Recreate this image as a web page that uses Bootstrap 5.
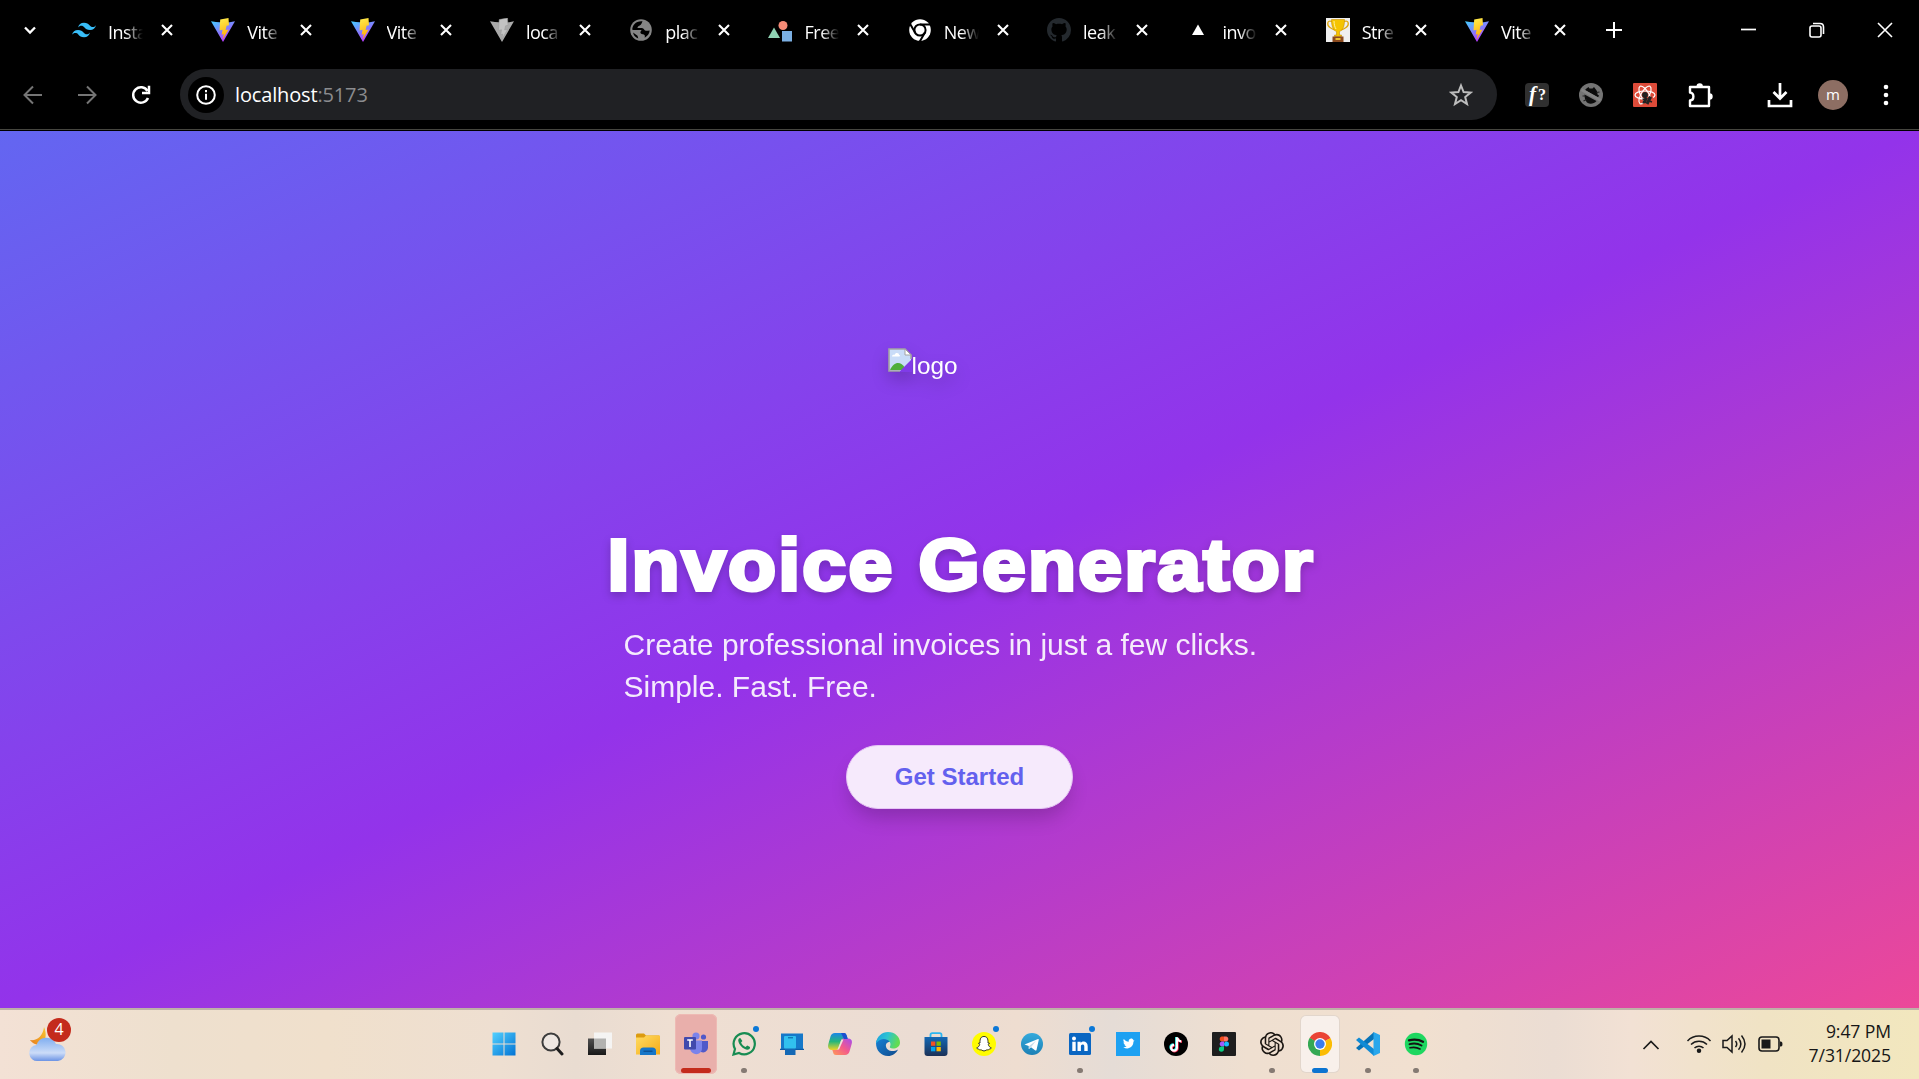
<!DOCTYPE html>
<html lang="en">
<head>
<meta charset="utf-8">
<title>Invoice Generator</title>
<link href="https://cdn.jsdelivr.net/npm/bootstrap@5.3.0/dist/css/bootstrap.min.css" rel="stylesheet">
<style>
body{height:1079px;overflow:hidden;font-family:"Open Sans","Noto Sans",sans-serif;background:#000}
svg{display:block;flex:none}
.sprite{position:absolute;width:0;height:0}
.ic{width:24px;height:24px}
/* browser chrome */
.browser{height:131px;color:#fff;border-bottom:1px solid #000;box-shadow:inset 0 -1px #46463f}
.strip{height:60px;padding-left:18px}
.tab-item{width:139.3px;height:60px;padding-left:2px}
.tab-name{width:35px;margin-left:12px;font-size:18px;letter-spacing:-.5px;white-space:nowrap;padding-top:4px;-webkit-mask-image:linear-gradient(90deg,#000 50%,transparent);mask-image:linear-gradient(90deg,#000 50%,transparent)}
.tab-x{margin-left:17px;width:14px;height:14px}
.bar-row{height:68px;padding-top:9px}
.nav-icons{height:51px}
.omni{width:1317px;height:51px;margin-left:29px;background:#202124;border-radius:26px;padding:0 24px 0 8px}
.site-info{width:36px;height:36px;border-radius:50%;background:#000}
.url{font-size:20px;letter-spacing:-.15px;margin-left:11px}
.url span{color:#8b8c8f}
.avatar{width:30px;height:30px;border-radius:50%;background:#8d6e63;font-size:15px;line-height:28px;text-align:center;margin-left:25px}
.ms-34{margin-left:34px}
.ms-30{margin-left:30px}
/* page */
.hero{height:877px;background:linear-gradient(to bottom right,#6366f1,#9333ea,#ec4899);font-family:"Liberation Sans",Arial,sans-serif;color:#fff;padding-top:217px}
.logo-box{width:144px;height:144px;font-size:24.3px;line-height:36px;filter:drop-shadow(0 8px 8px rgba(0,0,0,.18))}
.title{font-size:72px;font-weight:700;line-height:75px;margin-top:36px;width:702px;white-space:nowrap;letter-spacing:2.1px;-webkit-text-stroke:3.8px #fff;transform:scaleX(1.092);transform-origin:17px 0;filter:drop-shadow(0 4px 4px rgba(0,0,0,.2))}
.sub{width:672px;font-size:30px;line-height:42px;margin-top:21px;opacity:.9}
.cta{width:227px;height:64px;margin-top:37px;border-radius:32px;background:#f6eafc;color:#6360ee;font-weight:700;font-size:24px;border:1px solid #e6c6f5;box-shadow:0 12px 20px -4px rgba(0,0,0,.2)}
.cta:hover{background:#fff}
/* taskbar */
.taskbar{height:71px;color:#161616;border-top:2px solid #beb1a7;background:linear-gradient(90deg,#f3e1d5 0,#eee0ce 9%,#f0e0cc 17%,#eedfd1 26%,#e9dcd1 30%,#efdfd2 35%,#ebdcd3 48%,#eeddd0 53%,#e5dcd6 58%,#efdfd0 65%,#f1e0d0 74%,#ebddd3 81%,#f2e1d4 85%,#f0e3c4 92%,#f2e7be 100%)}
.weather{width:480px;padding-left:29px}
.count{position:absolute;left:18px;top:-8px;width:24px;height:24px;border-radius:50%;background:#c42b1c;color:#fff;font-size:16px;line-height:23px;text-align:center}
.app{width:48px;height:69px;position:relative;padding-bottom:1px}
.app.tile::before{content:"";position:absolute;left:5px;top:6px;width:38px;height:56px;border-radius:5px;background:#f8f0eb;box-shadow:0 0 0 1px #e2d6cc}
.app.alert-tile::before{left:3px;top:4px;width:42px;height:60px;background:#e9afab;box-shadow:inset 0 0 0 1px #eebab4;border-radius:6px}
.app svg{position:relative}
.app.run::after{content:"";position:absolute;left:21px;bottom:6px;width:6px;height:5px;border-radius:3px;background:#857a73}
.app.tile::after{content:"";position:absolute;left:16px;bottom:6px;width:16px;height:5px;border-radius:3px;background:#0b74d1}
.app.alert-tile::after{left:9px;bottom:6px;width:30px;background:#c42b1c}
.ping{position:absolute;left:33px;top:16px;width:6px;height:6px;border-radius:50%;background:#0b78d7}
.clock{font-size:17.6px;line-height:24px;letter-spacing:-.1px;width:108px;padding-bottom:3px}
</style>
</head>
<body>
<svg class="sprite">
<defs>
<linearGradient id="va" x1="0" y1="0" x2=".6" y2="1"><stop stop-color="#41d1ff"/><stop offset="1" stop-color="#bd34fe"/></linearGradient>
<linearGradient id="vb" x1=".4" y1="0" x2=".6" y2="1"><stop stop-color="#ffea4a"/><stop offset="1" stop-color="#ffa800"/></linearGradient>
<linearGradient id="wa" x1="0" y1="0" x2="1" y2="1"><stop stop-color="#52d1ff"/><stop offset="1" stop-color="#0273d4"/></linearGradient>
<linearGradient id="fa" x1="0" y1="0" x2="1" y2="1"><stop stop-color="#ffdc62"/><stop offset="1" stop-color="#f6ab17"/></linearGradient>
<linearGradient id="ta" x1="0" y1="0" x2="0" y2="1"><stop stop-color="#505050"/><stop offset="1" stop-color="#181818"/></linearGradient>
<linearGradient id="ca" x1="0" y1="0" x2="0" y2="1"><stop stop-color="#1b86e8"/><stop offset=".5" stop-color="#25b67c"/><stop offset="1" stop-color="#f0d326"/></linearGradient>
<linearGradient id="cb" x1="1" y1="0" x2="0" y2="1"><stop stop-color="#a44bf0"/><stop offset=".5" stop-color="#f35a8c"/><stop offset="1" stop-color="#ff9a56"/></linearGradient>
<linearGradient id="ea" x1="0" y1="0" x2="1" y2=".3"><stop stop-color="#1b9de2"/><stop offset=".5" stop-color="#2bc3d2"/><stop offset="1" stop-color="#62dc52"/></linearGradient>
<linearGradient id="eb" x1="0" y1="0" x2="1" y2="1"><stop stop-color="#1683d9"/><stop offset="1" stop-color="#114a8b"/></linearGradient>
<linearGradient id="sa" x1="0" y1="0" x2="0" y2="1"><stop stop-color="#1368b5"/><stop offset="1" stop-color="#1c3157"/></linearGradient>
<linearGradient id="ga" x1="0" y1="0" x2="0" y2="1"><stop stop-color="#35aadc"/><stop offset="1" stop-color="#1c80b5"/></linearGradient>
<linearGradient id="ma" x1="0" y1="1" x2="1" y2="0"><stop stop-color="#e87c1c"/><stop offset="1" stop-color="#f7c832"/></linearGradient>
<linearGradient id="mb" x1="0" y1="0" x2="0" y2="1"><stop stop-color="#80aef0"/><stop offset=".65" stop-color="#ccdcf8"/><stop offset="1" stop-color="#6b93e4"/></linearGradient>
</defs>
<symbol id="vite" viewBox="0 0 24 24"><path d="M0 3.200 12 24 24 3.200 16 4.800 5 4z" fill="url(#va)"/><path d="M17.500 0 9.200 1.600 8.500 12.400l3-.7-.8 5 2.100-.6-1.200 5.500 6-10.200-3 .6 1-4.200 2.400-.5z" fill="url(#vb)"/></symbol>
<symbol id="viteg" viewBox="0 0 24 24"><path d="M0 3.200 12 24 24 3.200 16 4.800 5 4z" fill="#aaa"/><path d="M17.500 0 9.200 1.600 8.500 12.400l3-.7-.8 5 2.100-.6-1.200 5.500 6-10.200-3 .6 1-4.200 2.400-.5z" fill="#c3c3c3" stroke="#999" stroke-width=".5"/></symbol>
<symbol id="tailwind" viewBox="0 0 24 24"><path fill="#38bdf8" d="M12 4.800c-3.200 0-5.200 1.600-6 4.800 1.200-1.600 2.600-2.200 4.200-1.800.9.200 1.600.9 2.300 1.700 1.200 1.200 2.600 2.500 5.500 2.500 3.200 0 5.200-1.600 6-4.800-1.200 1.600-2.600 2.200-4.200 1.800-.9-.2-1.600-.9-2.300-1.700-1.200-1.200-2.600-2.500-5.500-2.500zM6 12c-3.200 0-5.200 1.600-6 4.800 1.200-1.600 2.600-2.200 4.200-1.800.9.200 1.600.9 2.300 1.700 1.200 1.200 2.600 2.500 5.500 2.500 3.200 0 5.200-1.600 6-4.800-1.200 1.600-2.600 2.200-4.200 1.800-.9-.2-1.600-.9-2.300-1.700C10.300 13.300 8.900 12 6 12z"/></symbol>
<symbol id="globe" viewBox="0 0 24 24"><circle cx="12" cy="12" r="10.800" fill="#858585"/><path fill="#000" d="M13.500 3.200c-1 2-1 3.300-2.800 4.300-1.400.6-2.200 1.300-2.200 2.500h4.500c2 .2 2 2.500 3.800 2.800 1.200.2 2.200-.3 3.900-.3-.3 3-2.200 5.700-5 7.200.2-1.500.5-2.300-.8-3.200-1.500-.8-3.200-.2-3.500-1.800-.2-1.300 1-1.700 1-2.700H4.500l-1.200-.2C3.100 7.200 7 2.600 13.500 3.200zM4 14.500l4.500 3.200.8 2.900A8.800 8.800 0 0 1 4 14.500z"/></symbol>
<symbol id="shapes" viewBox="0 0 24 24"><path d="M0 20 6 9.500 12 20z" fill="#8fd3b3"/><circle cx="15" cy="7.500" r="4.500" fill="#f58b76"/><path d="M14 13h10v10.500H14z" fill="#7cb0e4"/></symbol>
<symbol id="chromew" viewBox="0 0 24 24"><circle cx="12" cy="12" r="10.800" fill="#fff"/><circle cx="12" cy="12" r="5.600" fill="none" stroke="#000" stroke-width="2"/><path d="M12 6.500h10.500M7.200 14.800 2 5.800M16.800 14.800 11.500 24" stroke="#000" stroke-width="2"/></symbol>
<symbol id="github" viewBox="0 0 16 16"><path fill="#24292e" d="M8 0C3.580 0 0 3.580 0 8c0 3.540 2.290 6.530 5.470 7.590.4.070.55-.17.55-.38 0-.19-.01-.82-.01-1.490-2.010.37-2.530-.49-2.690-.94-.09-.23-.48-.94-.82-1.130-.28-.15-.68-.52-.01-.53.63-.01 1.080.58 1.230.82.720 1.210 1.870.87 2.330.66.070-.52.280-.87.510-1.070-1.780-.2-3.640-.89-3.640-3.950 0-.87.310-1.590.82-2.150-.08-.2-.36-1.020.08-2.120 0 0 .67-.21 2.200.82.640-.18 1.320-.27 2-.27s1.360.09 2 .27c1.530-1.040 2.200-.82 2.200-.82.440 1.100.16 1.920.08 2.120.51.56.82 1.270.82 2.150 0 3.070-1.870 3.750-3.650 3.950.29.250.54.730.54 1.480 0 1.070-.01 1.930-.01 2.200 0 .21.15.46.55.38A8.010 8.010 0 0 0 16 8c0-4.420-3.580-8-8-8z"/></symbol>
<symbol id="tri" viewBox="0 0 24 24"><path d="M6 17 12 6.500 18 17z" fill="#fff"/></symbol>
<symbol id="trophy" viewBox="0 0 24 24"><path fill="#efefef" d="M0 0h24v24H0z"/><path d="M6 3.500C1 1.500.5 7 4 9.500c1.500 1.200 3 2 5 2.500M18 3.500c5-2 5.500 3.500 2 6-1.500 1.200-3 2-5 2.500" fill="none" stroke="#e0a80c" stroke-width="1.300"/><path d="M5.500 1.500h13c0 7-1.500 10.500-5 12v3.500h2v1.500h-7V17h2v-3.500c-3.500-1.500-5-5-5-12z" fill="#f5c400" stroke="#c98f00" stroke-width=".6"/><path d="M8 3c.2 4 .8 6 2 8" stroke="#fff2a0" fill="none"/><path fill="#8b4a1e" d="M6.500 18.500h11v5.500h-11z"/><path fill="#efc12f" d="M9.500 20h5v2h-5z"/></symbol>
<symbol id="x" viewBox="0 0 14 14"><path d="M2 2l10 10M12 2 2 12" stroke="#fff" stroke-width="2.100"/></symbol>
<symbol id="fq" viewBox="0 0 24 24"><rect width="24" height="24" rx="4" fill="#303030"/></symbol>
<symbol id="bugoff" viewBox="0 0 24 24"><circle cx="12" cy="12" r="12" fill="#747474"/><path fill="#0c0c0c" d="M7.500 5.500 9.500 4l1 1.500h3L15 4l1.500 2c1.500 1.500 2 3 2 5.500l1.500 1-1 2L6 7zM5.500 11.500l12 6.500c-3 3.500-9 3.500-10.500 0C6 16.500 5.500 14 5.500 11.500z"/><path d="M3.500 13h3M17.500 9.500l3-.5M4.500 18l3-1.500" stroke="#222" stroke-width="1.200"/><path d="M2.500 6.800 21.500 17.200" stroke="#858585" stroke-width="2.800"/></symbol>
<symbol id="reactx" viewBox="0 0 24 24"><rect width="24" height="24" rx="1" fill="#dd4b39"/><g fill="none" stroke="#fff" stroke-width="1.200"><ellipse cx="12" cy="12" rx="10" ry="4"/><ellipse cx="12" cy="12" rx="10" ry="4" transform="rotate(60 12 12)"/><ellipse cx="12" cy="12" rx="10" ry="4" transform="rotate(120 12 12)"/></g><path d="M11 14h9v8h-9z" fill="#dd4b39"/><g stroke="#222" stroke-width="1.500"><circle cx="12" cy="12" r="2.200" fill="#222"/><path d="M13.500 14.500l-2.500 5M17.500 14l-3.500 7" stroke-width="3"/><path d="M9.500 16l4 1M9.500 20l4-1M15 17.500l4 1.500M15.500 14l3 .5"/></g></symbol>
<symbol id="puzzle" viewBox="0 0 26 26"><path fill="none" stroke="#fff" stroke-width="2.400" stroke-linejoin="round" d="M3 5h19v19H3v-5.500c4.500 0 4.500-8 0-8z"/><path fill="#fff" d="M9.500 4.500a3.200 3.200 0 0 1 6.400 0zM22.500 11.300a3.200 3.200 0 0 1 0 6.400z"/></symbol>
<symbol id="win" viewBox="0 0 24 24"><path fill="url(#wa)" d="M.5.5h11v11H.5zM12.500.5h11v11h-11zM.5 12.500h11v11H.5zM12.500 12.500h11v11h-11z"/></symbol>
<symbol id="find" viewBox="0 0 24 24"><circle cx="11" cy="10" r="8.600" fill="#eee7e2" stroke="#3c3c3c" stroke-width="2"/><path d="M17 16.500 22 22" stroke="#1e1e1e" stroke-width="3" stroke-linecap="round"/></symbol>
<symbol id="task" viewBox="0 0 24 24"><path fill="url(#ta)" d="M0 6.500h18V23H0z"/><path fill="#f5f4f3" d="M6 .5h18v16H6z"/><path fill="#b2b2b0" d="M6 6.500h12v10H6z"/></symbol>
<symbol id="folder" viewBox="0 0 24 24"><path fill="#dc9b10" d="M0 3q0-1.500 1.500-1.500H8L10 3.500h13V8H0z"/><path fill="url(#fa)" d="M0 5.500h8l2-2h14v19H0z"/><path fill="#1676c8" d="M4 23v-4q0-3.500 3.500-3.500h9Q20 15.500 20 19v4z"/><path d="M7.500 19.200h9" stroke="#0b4b8c" stroke-width="1.200"/></symbol>
<symbol id="teams" viewBox="0 0 24 24"><circle cx="19.500" cy="5" r="2.600" fill="#5059c9"/><path d="M15 9h9v7a5 5 0 0 1-7 4z" fill="#5059c9"/><circle cx="12" cy="4" r="3.600" fill="#7b83eb"/><path d="M6 8.500h12V16c0 8-10.500 8-12 1z" fill="#7b83eb"/><rect y="5" width="12" height="12.500" rx="1" fill="#4149ad"/><path d="M3.200 8h5.600M6 8v7" stroke="#fff" stroke-width="1.600"/></symbol>
<symbol id="wa-i" viewBox="0 0 24 24"><path d="M1.500 22.500 3 17A10.600 10.600 0 1 1 7 21z" fill="none" stroke="#178c52" stroke-width="2.200"/><path fill="#178c52" d="M8.300 6c-1.500 0-2.300 1.500-2 3 .8 4.200 4.500 7.800 8.700 8.800 1.700.2 3.300-1 3-2.800l-2.800-1.500-1.600 1.600c-2-.8-3.700-2.500-4.500-4.500L10.400 9z"/></symbol>
<symbol id="phone" viewBox="0 0 24 24"><path fill="#1678c9" d="M1 1.500h22v15l1 1.500H0l1-1.500z"/><path fill="#0d5ba6" d="M0 16.800h24v1.200H0z"/><rect x="5" y="15" width="10.500" height="8" fill="#1468b5"/><rect x="4" y="4" width="12" height="12.500" rx="1" fill="#31c0ef"/><path d="M8 5.800h5" stroke="#0b5c9b"/></symbol>
<symbol id="copilot" viewBox="0 0 24 24"><path fill="url(#ca)" d="M7 1h9c2 0 2.500 2 3 3.500l.7 2.500H16c-2 0-3 1-3.500 3L11 15c-.6 2-1.500 3-3 3H4c-3.500 0-4.700-2.500-3.500-6.500l2-7C3.200 2.200 4.500 1 7 1z"/><path fill="url(#cb)" d="M17 23H8c-2 0-2.500-1-3-3l-.7-2H8c2 0 3-1 3.500-3L13 9c.6-2 1.500-2.500 3-2.500h4c3.500 0 4.700 2.500 3.500 6l-2 7C20.800 21.800 19.500 23 17 23z"/><path d="M13 1h3c2 0 2.500 2 3 3.500l.7 2.500H16z" fill="#1c4fd0"/><path d="M13.500 7.500h2L11 17.500H9.500z" fill="#f0e2da"/></symbol>
<symbol id="edge" viewBox="0 0 24 24"><path fill="url(#eb)" d="M0 11C1 3 12 3 14 10c-3 0-4.500 2-4 4.500.8 4.500 7 6 12 3C20 21.500 16.500 24 12 24 5 24 0 18.500 0 11z"/><path fill="url(#ea)" d="M0 11.500C.5 4.500 6 0 12 0c7 0 12 5 12 10.500 0 4-3.500 6-7 6-3 0-3.800-1.200-2.800-2.500C16.500 8.500 6.500 2.500 0 11.500z"/></symbol>
<symbol id="store" viewBox="0 0 24 24"><path d="M6.500 6V3q0-1.800 1.800-1.800h7.400Q17.500 1.200 17.500 3v3" fill="none" stroke="#2bb5f0" stroke-width="1.800"/><path fill="url(#sa)" d="M.5 5h23v16q0 3-3 3h-17q-3 0-3-3z"/><path fill="#f25022" d="M7 9.500h4.300v4.300H7z"/><path fill="#7fba00" d="M12.500 9.500h4.300v4.300h-4.300z"/><path fill="#00a4ef" d="M7 15h4.300v4.300H7z"/><path fill="#ffb900" d="M12.500 15h4.300v4.300h-4.300z"/></symbol>
<symbol id="snap" viewBox="0 0 24 24"><circle cx="12" cy="12" r="12" fill="#fffc00"/><path d="M12 4.500c-3 0-4.200 2-4 6.500l-1.500.2 1.200 1.400c-.5 1.700-1.500 2.700-3 3.200.3 1.200 1.500 1 2.300 1.500.6 1 1.800.2 2.800.8 1.500 1.100 2.900 1.100 4.400 0 1-.6 2.200.2 2.800-.8.800-.5 2-.3 2.300-1.500-1.500-.5-2.500-1.500-3-3.200l1.200-1.400L16 11c.2-4.500-1-6.500-4-6.500z" fill="#fff" stroke="#222" stroke-width=".9"/></symbol>
<symbol id="tele" viewBox="0 0 24 24"><circle cx="12" cy="12" r="11" fill="url(#ga)"/><path fill="#fff" d="M4.500 12.500 18 7c.5-.2.900.1.800.7L16.500 18c-.2.600-.7.700-1.200.4L11 15.300 8.800 17v-3z"/><path d="M8.800 14.200 16 8.800l-5 6.500L8.800 17z" fill="#c6dcea"/></symbol>
<symbol id="linked" viewBox="0 0 24 24"><rect x="1" y="1" width="22" height="22" rx="1.500" fill="#0a66c2"/><circle cx="6" cy="6.500" r="2" fill="#fff"/><path fill="#fff" d="M4.300 9.700h3.400v9.300H4.300zM9.500 9.700h3.200V11c2-2.600 7-1.800 7 3.200V19h-3.400v-4.500c0-2.700-3.400-2.600-3.400 0V19H9.500z"/></symbol>
<symbol id="bird" viewBox="0 0 24 24"><path fill="#1da1f2" d="M0 0h24v24H0z"/><path fill="#fff" d="M17.500 8.500c-.5-2-2.800-2.500-4-1.200-.8.800-.9 1.500-.7 2.400-2-.1-3.800-1-5-2.700-.8 1.400-.4 2.700.7 3.500l-1-.3c0 1.200.7 2 1.900 2.400h-1c.3 1 1.100 1.500 2.200 1.600-.9.800-2.200 1.100-3.400 1 5 3 10.200 0 10.200-5.400l1.100-1.300z"/></symbol>
<symbol id="tiktok" viewBox="0 0 24 24"><circle cx="12" cy="12" r="12" fill="#000"/><path d="M12.200 5v10.200a2.900 2.900 0 1 1-2.800-2.900M12.500 5.500c.2 2.200 1.600 3.600 4 3.800" fill="none" stroke="#25f4ee" stroke-width="2.200"/><path d="M13.600 6v10.400a2.900 2.900 0 1 1-2.800-2.900M14 6c.2 2.200 1.600 3.600 4 3.800" fill="none" stroke="#fe2c55" stroke-width="2.200"/><path d="M12.900 5.200v10.500A2.900 2.900 0 1 1 10 12.900M13.200 5.500c.2 2.200 1.600 3.600 4 3.800" fill="none" stroke="#fff" stroke-width="2.200"/></symbol>
<symbol id="figma" viewBox="0 0 24 24"><rect width="24" height="24" rx="1" fill="#1e1e1e"/><path fill="#f24e1e" d="M12 4.500H9.500a2.600 2.600 0 0 0 0 5H12z"/><path fill="#ff7262" d="M12 4.500h2.500a2.600 2.600 0 0 1 0 5H12z"/><path fill="#a259ff" d="M12 9.500H9.500a2.600 2.600 0 0 0 0 5H12z"/><circle cx="14.500" cy="12" r="2.500" fill="#1abcfe"/><path fill="#0acf83" d="M12 14.500H9.500a2.600 2.600 0 1 0 2.500 2.600z"/></symbol>
<symbol id="gpt" viewBox="0 0 24 24"><path fill="#1b1612" d="M22.282 9.821a5.985 5.985 0 0 0-.516-4.911 6.046 6.046 0 0 0-6.510-2.900A6.065 6.065 0 0 0 4.981 4.182a5.985 5.985 0 0 0-3.998 2.900 6.046 6.046 0 0 0 .743 7.097 5.980 5.980 0 0 0 .511 4.911 6.051 6.051 0 0 0 6.515 2.900A5.985 5.985 0 0 0 13.260 24a6.056 6.056 0 0 0 5.772-4.206 5.990 5.990 0 0 0 3.998-2.900 6.056 6.056 0 0 0-.747-7.073zM13.260 22.430a4.476 4.476 0 0 1-2.876-1.041l.141-.081 4.779-2.758a.795.795 0 0 0 .393-.681v-6.737l2.020 1.169a.071.071 0 0 1 .038.052v5.583a4.504 4.504 0 0 1-4.495 4.494zM3.600 18.304a4.471 4.471 0 0 1-.535-3.014l.142.085 4.783 2.759a.771.771 0 0 0 .781 0l5.843-3.369v2.332a.08.08 0 0 1-.033.062L9.740 19.950a4.500 4.500 0 0 1-6.141-1.646zM2.341 7.896a4.485 4.485 0 0 1 2.366-1.973V11.600a.766.766 0 0 0 .388.676l5.815 3.355-2.020 1.169a.076.076 0 0 1-.071 0l-4.830-2.787A4.504 4.504 0 0 1 2.341 7.872zm16.597 3.855-5.833-3.387L15.119 7.200a.076.076 0 0 1 .071 0l4.830 2.791a4.494 4.494 0 0 1-.677 8.105v-5.678a.79.79 0 0 0-.405-.667zm2.010-3.023-.141-.085-4.774-2.782a.776.776 0 0 0-.785 0L9.409 9.230V6.897a.066.066 0 0 1 .028-.061l4.830-2.787a4.500 4.500 0 0 1 6.681 4.660zM8.307 12.863l-2.020-1.164a.08.08 0 0 1-.038-.057V6.075a4.500 4.500 0 0 1 7.376-3.453l-.142.080L8.704 5.460a.795.795 0 0 0-.393.681zm1.098-2.366 2.602-1.500 2.607 1.500v3l-2.598 1.500-2.607-1.500z"/></symbol>
<symbol id="chrome" viewBox="0 0 24 24"><path fill="#ea4335" d="M12 12 1.600 6a12 12 0 0 1 20.800 0z"/><path fill="#fbbc04" d="M12 12 22.400 6A12 12 0 0 1 12 24z"/><path fill="#34a853" d="M12 12v12A12 12 0 0 1 1.600 6z"/><path fill="#ea4335" d="M12 6h10.400L12 10z"/><path fill="#34a853" d="M1.600 6 6.800 15 12 12z"/><path fill="#fbbc04" d="M17.200 15 12 24V14z"/><circle cx="12" cy="12" r="6" fill="#fff"/><circle cx="12" cy="12" r="4.700" fill="#3b7cec"/></symbol>
<symbol id="code" viewBox="0 0 24 24"><path fill="#0873b7" d="M18 0v7L3 18.500 0 16z"/><path fill="#118bd5" d="M18 24v-7L3 5.500 0 8z"/><path fill="#29a7ec" d="M17.500 0 24 3v18l-6.500 3z"/></symbol>
<symbol id="spot" viewBox="0 0 24 24"><circle cx="12" cy="12" r="11.200" fill="#1ed760"/><g fill="none" stroke="#141414" stroke-linecap="round"><path d="M5 8.300c5-1.300 10-.8 14 1.500" stroke-width="2.300"/><path d="M5.500 12.200c4.500-1.200 8.500-.7 12 1.300" stroke-width="1.900"/><path d="M6 15.800c3.800-.9 7-.5 10 1.200" stroke-width="1.600"/></g></symbol>
</svg>

<header class="browser">
  <div class="strip d-flex align-items-center">
    <svg width="24" height="24" viewBox="0 0 24 24"><path d="M7 9.500l5 5 5-5" fill="none" stroke="#fff" stroke-width="2.300"/></svg>
    <div class="d-flex ps-4 ms-1" id="tabs"></div>
    <svg class="ms-1" width="16" height="16" viewBox="0 0 16 16"><path d="M8 0v16M0 8h16" stroke="#fff" stroke-width="2"/></svg>
    <div class="d-flex align-items-center ms-auto gap-5" style="padding-right:26px">
      <svg class="me-1" width="16" height="16" viewBox="0 0 16 16"><path d="M0 7.500h15" stroke="#fff" stroke-width="1.700"/></svg>
      <svg width="16" height="16" viewBox="0 0 16 16" fill="none" stroke="#fff" stroke-width="1.600"><rect x="1" y="4" width="11" height="11" rx="2"/><path d="M4 1.500h7q3.500 0 3.500 3.500v7"/></svg>
      <svg class="ms-1" width="16" height="16" viewBox="0 0 16 16"><path d="M1 1l14 14M15 1 1 15" stroke="#fff" stroke-width="1.600"/></svg>
    </div>
  </div>
  <div class="bar-row">
    <div class="nav-icons d-flex align-items-center">
      <svg style="margin-left:23px" width="20" height="20" viewBox="0 0 20 20" fill="none" stroke="#757575" stroke-width="2"><path d="M19 10H2M10 1.500 1.500 10l8.500 8.500"/></svg>
      <svg class="ms-34" width="20" height="20" viewBox="0 0 20 20" fill="none" stroke="#757575" stroke-width="2"><path d="M1 10h17M10 1.500l8.500 8.500-8.500 8.500"/></svg>
      <svg class="ms-34" width="20" height="20" viewBox="0 0 20 20" fill="none" stroke="#fff" stroke-width="2.500"><path d="M17 13a7.700 7.700 0 1 1-.5-7"/><path d="M18 .8V8h-7" /></svg>
      <div class="omni d-flex align-items-center">
        <div class="site-info d-flex align-items-center justify-content-center"><svg width="20" height="20" viewBox="0 0 20 20"><circle cx="10" cy="10" r="8.800" fill="none" stroke="#fff" stroke-width="2"/><path d="M10 8.800v6M10 5v2.200" stroke="#fff" stroke-width="2"/></svg></div>
        <div class="url">localhost<span>:5173</span></div>
        <svg class="ms-auto" width="24" height="24" viewBox="0 0 24 24"><path d="M12 2.500l2.600 6.600 7 .5-5.400 4.500 1.800 6.900-6-3.800-6 3.800 1.800-6.900-5.400-4.500 7-.5z" fill="none" stroke="#bdbdbd" stroke-width="2"/></svg>
      </div>
      <svg style="margin-left:28px" class="ic"><use href="#fq"/><text x="4" y="18" font-family="Liberation Serif" font-style="italic" font-weight="bold" font-size="21" fill="#fff">f</text><text x="13" y="17" font-family="Liberation Serif" font-weight="bold" font-size="16" fill="#fff">?</text></svg>
      <svg class="ic ms-30"><use href="#bugoff"/></svg>
      <svg class="ic ms-30"><use href="#reactx"/></svg>
      <svg class="ms-30" width="26" height="26"><use href="#puzzle"/></svg>
      <svg style="margin-left:54px" width="26" height="26" viewBox="0 0 26 26" fill="none" stroke="#fff" stroke-width="2.700"><path d="M13 1v15M6.500 10l6.500 6.500 6.500-6.500M2 18v6h22v-6"/></svg>
      <div class="avatar">m</div>
      <svg class="ms-34" width="8" height="24" viewBox="0 0 8 24" fill="#fff"><circle cx="4" cy="4" r="2.300"/><circle cx="4" cy="12" r="2.300"/><circle cx="4" cy="20" r="2.300"/></svg>
    </div>
  </div>
</header>

<main class="hero d-flex flex-column align-items-center">
  <div class="logo-box d-flex align-items-start">
    <svg width="24" height="24" viewBox="0 0 24 24"><path d="M1 1h16l6 6v16H1z" fill="#c9dcf8"/><path d="M2 22c4-9 11-9 15-2l-2 2z" fill="#4fae3a"/><path d="M4 8.500c0-2 2-2 2.500-1.500 1-3 5-2 4.500 0 1.500 0 1.500 1.500 0 1.500z" fill="#fff"/><path d="M24 11 11 24h13z" fill="#803be8"/><path d="M23 11V7l-6-6H1v22h11" fill="none" stroke="#a3a3a3" stroke-width="1.600"/><path d="M17 1v6h6z" fill="#fff" stroke="#a3a3a3"/></svg>
    <span>logo</span>
  </div>
  <h1 class="title mb-0">Invoice Generator</h1>
  <p class="sub mb-0">Create professional invoices in just a few clicks.<br>Simple. Fast. Free.</p>
  <button class="cta btn p-0" type="button">Get Started</button>
</main>

<footer class="taskbar d-flex align-items-center">
  <div class="weather flex-shrink-0"><div class="position-relative">
    <svg width="38" height="38" viewBox="0 0 38 38"><path d="M15 1c3 7 2 14-3 18C7 19 3 17 1 14c7 1 13-4 14-13z" fill="url(#ma)"/><path d="M9 35a8 8 0 0 1-1.500-16A10.500 10.500 0 0 1 27 18a8.500 8.500 0 0 1 2 17z" fill="url(#mb)"/></svg>
    <span class="count">4</span></div></div>
  <div class="d-flex align-items-center" id="apps"></div>
  <div class="d-flex align-items-center ms-auto" style="padding-right:28px">
    <svg width="18" height="12" viewBox="0 0 18 12"><path d="M1.500 10 9 2.500l7.500 7.500" fill="none" stroke="#1a1a1a" stroke-width="1.700"/></svg>
    <svg style="margin-left:26px" width="26" height="24" viewBox="0 0 26 24" fill="none" stroke="#1a1a1a" stroke-width="1.500"><path d="M1.500 8a16 16 0 0 1 23 0M5 11.500a11.500 11.500 0 0 1 16 0M8.500 15a6.500 6.500 0 0 1 9 0"/><circle cx="13" cy="17.700" r="1.500" fill="#1a1a1a"/></svg>
    <svg style="margin-left:10px" width="25" height="24" viewBox="0 0 25 24" fill="none" stroke="#1a1a1a" stroke-width="1.500"><path d="M1 7.500h4l5-4.500v16l-5-4.500H1zM13.500 8q2.500 3 0 6M16.500 5.300q4.700 5.700 0 11.400M19.500 2.500q7 8.500 0 17"/></svg>
    <svg style="margin-left:11px" width="25" height="24" viewBox="0 0 25 24"><rect x="1" y="4" width="20" height="14" rx="3" fill="none" stroke="#1a1a1a" stroke-width="1.600"/><path d="M3.500 6.500h9v9h-9zM22 8.500h1q1.500 0 1.500 2.500t-1.500 2.500h-1z" fill="#1a1a1a"/></svg>
    <div class="clock text-end">9:47 PM<br>7/31/2025</div>
  </div>
</footer>

<script src="https://cdn.jsdelivr.net/npm/bootstrap@5.3.0/dist/js/bootstrap.bundle.min.js"></script>
<script>
const tabs = [["tailwind","Insta"],["vite","Vite"],["vite","Vite"],["viteg","loca"],["globe","plac"],["shapes","Free"],["chromew","New"],["github","leak"],["tri","invo"],["trophy","Stre"],["vite","Vite"]];
document.getElementById("tabs").innerHTML = tabs.map(([i, t]) =>
  `<div class="tab-item d-flex align-items-center"><svg class="ic"><use href="#${i}"/></svg><div class="tab-name">${t}</div><svg class="tab-x"><use href="#x"/></svg></div>`).join("");
// icon, state classes, notification dot
const apps = [["win"],["find"],["task"],["folder"],["teams","tile alert-tile"],["wa-i","run",1],["phone"],["copilot"],["edge"],["store"],["snap","",1],["tele"],["linked","run",1],["bird"],["tiktok"],["figma"],["gpt","run"],["chrome","tile"],["code","run"],["spot","run"]];
document.getElementById("apps").innerHTML = apps.map(([i, c = "", p]) =>
  `<div class="app ${c} d-flex align-items-center justify-content-center"><svg class="ic"><use href="#${i}"/></svg>${p ? '<span class="ping"></span>' : ""}</div>`).join("");
</script>
</body>
</html>
